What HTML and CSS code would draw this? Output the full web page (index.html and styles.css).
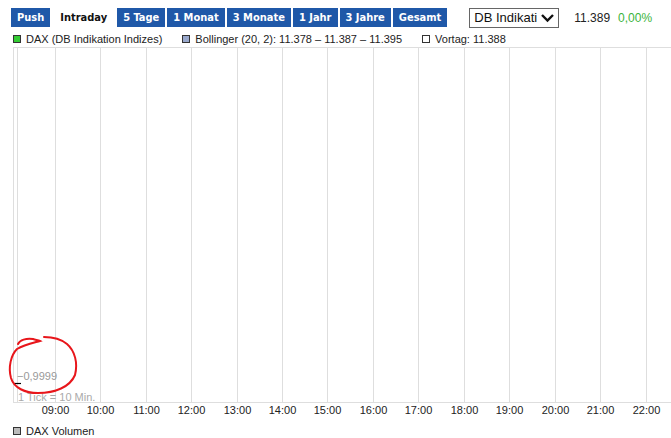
FILE: index.html
```html
<!DOCTYPE html>
<html>
  <head>
    <title>DAX Intraday</title>
    <link rel="stylesheet" href="styles.css">
  </head>
  <body>
    <div class="toolbar">
      <div class="btn-grp">
        <button>Push</button
        ><button class="active">Intraday</button
        ><button>5 Tage</button
        ><button>1 Monat</button
        ><button>3 Monate</button
        ><button>1 Jahr</button
        ><button>3 Jahre</button
        ><button>Gesamt</button>
      </div>
      <div class="select">
        <span>DB Indikati</span>
        <svg width="15" height="10" viewBox="0 0 15 10">
          <path d="M2 2 L7.5 7.5 L13 2" fill="none" stroke="#111" stroke-width="2.4" />
        </svg>
      </div>
      <span class="price">11.389</span>
      <span class="change">0,00%</span>
    </div>

    <div class="legend">
      <span class="item"><i class="sq green"></i>DAX (DB Indikation Indizes)</span>
      <span class="item"><i class="sq blue"></i>Bollinger (20, 2): 11.378 &ndash; 11.387 &ndash; 11.395</span>
      <span class="item"><i class="sq"></i>Vortag: 11.388</span>
    </div>

    <div class="chart">
      <svg width="671" height="374" viewBox="0 46 671 374">
        <g class="grid">
          <line x1="13.5" y1="48.5" x2="671" y2="48.5" />
          <line x1="13.5" y1="48" x2="13.5" y2="404" />
          <line x1="17.5" y1="48" x2="17.5" y2="404" />
          <line x1="55.5" y1="48" x2="55.5" y2="404" />
          <line x1="100.5" y1="48" x2="100.5" y2="404" />
          <line x1="146.5" y1="48" x2="146.5" y2="404" />
          <line x1="191.5" y1="48" x2="191.5" y2="404" />
          <line x1="237.5" y1="48" x2="237.5" y2="404" />
          <line x1="282.5" y1="48" x2="282.5" y2="404" />
          <line x1="327.5" y1="48" x2="327.5" y2="404" />
          <line x1="373.5" y1="48" x2="373.5" y2="404" />
          <line x1="418.5" y1="48" x2="418.5" y2="404" />
          <line x1="464.5" y1="48" x2="464.5" y2="404" />
          <line x1="509.5" y1="48" x2="509.5" y2="404" />
          <line x1="555.5" y1="48" x2="555.5" y2="404" />
          <line x1="600.5" y1="48" x2="600.5" y2="404" />
          <line x1="646.5" y1="48" x2="646.5" y2="404" />
          <line x1="13" y1="403.5" x2="671" y2="403.5" />
        </g>
        <line x1="13" y1="384.5" x2="21" y2="384.5" stroke="#000" stroke-width="1.2" />
        <text class="ylabel" x="17" y="381">&minus;0,9999</text>
        <text class="tick" x="18" y="402">1 Tick = 10 Min.</text>
        <g class="hours">
          <text x="55.5" y="415">09:00</text>
          <text x="100.5" y="415">10:00</text>
          <text x="146.5" y="415">11:00</text>
          <text x="191.5" y="415">12:00</text>
          <text x="237.5" y="415">13:00</text>
          <text x="282.5" y="415">14:00</text>
          <text x="327.5" y="415">15:00</text>
          <text x="373.5" y="415">16:00</text>
          <text x="418.5" y="415">17:00</text>
          <text x="464.5" y="415">18:00</text>
          <text x="509.5" y="415">19:00</text>
          <text x="555.5" y="415">20:00</text>
          <text x="600.5" y="415">21:00</text>
          <text x="646.5" y="415">22:00</text>
        </g>
        <path class="mark" d="M18,345 C20,341 26,339 33,340 C36,341 38,341 40,342 C33,344 24,346 17,350 C11,356 8,368 11,379 C14,389 25,394 38,394 C55,394 70,388 75,376 C78,364 75,352 67,345 C61,340 53,338 44,338" />
      </svg>
    </div>

    <div class="legend bottom">
      <span class="item"><i class="sq gray"></i>DAX Volumen</span>
    </div>
  </body>
</html>
```

FILE: styles.css
```css
body {
  margin: 0;
  background: #fff;
  color: #222;
  font-family: "Liberation Sans", Arial, sans-serif;
  font-size: 11px;
  width: 671px;
  height: 438px;
  overflow: hidden;
}

.toolbar {
  display: flex;
  align-items: center;
  height: 19px;
  margin-top: 8px;
  padding-left: 11px;
}

.btn-grp {
  display: flex;
  gap: 2px;

  button {
    height: 19px;
    padding: 0 6px;
    border: 0;
    border-radius: 0;
    background: #1f58a8;
    color: #fff;
    font-family: "DejaVu Sans Condensed", "DejaVu Sans", sans-serif;
    font-weight: bold;
    font-size: 11px;

    &.active {
      background: #fff;
      color: #111;
      padding: 0 8px;
    }
  }
}

.select {
  display: flex;
  align-items: center;
  justify-content: space-between;
  box-sizing: border-box;
  width: 90px;
  height: 20px;
  margin-left: 22px;
  padding: 0 3px 0 4px;
  border: 1px solid #666;
  font-size: 13px;
  color: #111;
}

.price {
  margin-left: 15px;
  font-size: 12px;
  color: #222;
}

.change {
  margin-left: 8px;
  font-size: 12px;
  color: #3cb43c;
}

.legend {
  display: flex;
  gap: 20px;
  height: 12px;
  margin-top: 6px;
  padding-left: 13px;
  line-height: 12px;
  color: #222;

  &.bottom {
    margin-top: 6px;
  }
}

.item {
  display: flex;
  align-items: center;
}

.sq {
  display: inline-block;
  box-sizing: border-box;
  width: 8px;
  height: 8px;
  margin-right: 5px;
  border: 1px solid #333;
  background: #fff;

  &.green {
    background: #33cc33;
  }

  &.blue {
    background: #99a8cc;
  }

  &.gray {
    background: #bbb;
  }
}

.chart {
  height: 374px;

  svg {
    display: block;
  }

  .grid line {
    stroke: #dedede;
    stroke-width: 1;
  }

  text {
    font-family: "Liberation Sans", Arial, sans-serif;
    font-size: 11px;
  }

  .ylabel {
    fill: #999;
  }

  .tick {
    fill: #aaa;
  }

  .hours text {
    fill: #222;
    text-anchor: middle;
  }

  .mark {
    fill: none;
    stroke: #e8161b;
    stroke-width: 2;
    stroke-linecap: round;
  }
}
```
